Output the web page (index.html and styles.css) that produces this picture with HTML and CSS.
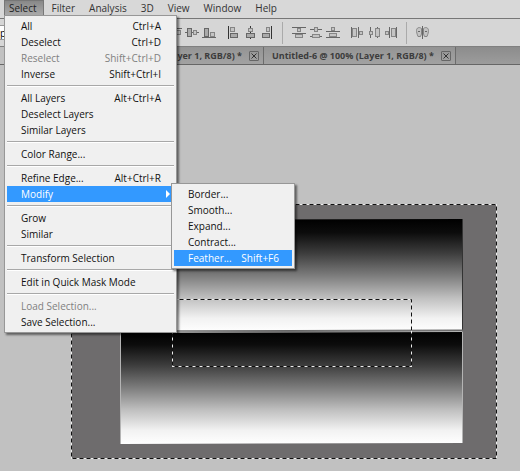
FILE: index.html
```html
<!DOCTYPE html>
<html lang="en">
<head>
    <meta charset="UTF-8">
    <meta name="viewport" content="width=device-width, initial-scale=1.0">
    <title>Untitled-6</title>
    <link rel="stylesheet" href="styles.css">
</head>
<body>

    <nav class="menubar">
        <div class="menu-root">
            <button type="button" class="top-item open">Select</button>
            <div class="menu">
                <button type="button" class="item"><span>All</span><span>Ctrl+A</span></button>
                <button type="button" class="item"><span>Deselect</span><span>Ctrl+D</span></button>
                <button type="button" class="item" disabled><span>Reselect</span><span>Shift+Ctrl+D</span></button>
                <button type="button" class="item"><span>Inverse</span><span>Shift+Ctrl+I</span></button>
                <hr>
                <button type="button" class="item"><span>All Layers</span><span>Alt+Ctrl+A</span></button>
                <button type="button" class="item">Deselect Layers</button>
                <button type="button" class="item">Similar Layers</button>
                <hr>
                <button type="button" class="item">Color Range...</button>
                <hr>
                <button type="button" class="item"><span>Refine Edge...</span><span>Alt+Ctrl+R</span></button>
                <div class="submenu-root">
                    <button type="button" class="item active has-submenu">
                        <span>Modify</span>
                        <svg width="4" height="8" viewBox="0 0 4 8"><path d="M0 0L4 4L0 8Z" fill="#fff"/></svg>
                    </button>
                    <div class="menu submenu">
                        <button type="button" class="item">Border...</button>
                        <button type="button" class="item">Smooth...</button>
                        <button type="button" class="item">Expand...</button>
                        <button type="button" class="item">Contract...</button>
                        <button type="button" class="item active"><span>Feather...</span><span>Shift+F6</span></button>
                    </div>
                </div>
                <hr>
                <button type="button" class="item">Grow</button>
                <button type="button" class="item">Similar</button>
                <hr>
                <button type="button" class="item">Transform Selection</button>
                <hr>
                <button type="button" class="item">Edit in Quick Mask Mode</button>
                <hr>
                <button type="button" class="item" disabled>Load Selection...</button>
                <button type="button" class="item">Save Selection...</button>
            </div>
        </div>
        <button type="button" class="top-item">Filter</button>
        <button type="button" class="top-item">Analysis</button>
        <button type="button" class="top-item">3D</button>
        <button type="button" class="top-item">View</button>
        <button type="button" class="top-item">Window</button>
        <button type="button" class="top-item">Help</button>
    </nav>

    <div class="options">
        <input type="text" class="field" value="p" aria-label="Auto-select">
        <div class="group">
            <button type="button" class="tool" aria-label="Align top edges">
                <svg viewBox="0 0 14 14"><path class="line" d="M0 2.5H14"/><rect class="dark" x="1.5" y="4.5" width="4" height="8"/><rect class="box" x="8.5" y="4.5" width="4" height="4"/></svg>
            </button>
            <button type="button" class="tool" aria-label="Align vertical centers">
                <svg viewBox="0 0 14 14"><path class="line" d="M0 6.5H14"/><rect class="dark" x="2.5" y="2.5" width="4" height="8"/><rect class="box" x="8.5" y="4.5" width="3" height="4"/></svg>
            </button>
            <button type="button" class="tool" aria-label="Align bottom edges">
                <svg viewBox="0 0 14 14"><path class="line" d="M0 11.5H14"/><rect class="dark" x="2.5" y="2.5" width="4" height="8"/><rect class="box" x="8.5" y="6.5" width="4" height="4"/></svg>
            </button>
        </div>
        <div class="group">
            <button type="button" class="tool" aria-label="Align left edges">
                <svg viewBox="0 0 14 14"><path class="line strong" d="M1.5 0V13"/><rect class="box" x="3.5" y="1.5" width="4" height="4"/><rect class="dark" x="3.5" y="7.5" width="7" height="4"/></svg>
            </button>
            <button type="button" class="tool" aria-label="Align horizontal centers">
                <svg viewBox="0 0 14 14"><path class="line strong" d="M6.5 0V13"/><rect class="box" x="4.5" y="2.5" width="4" height="3"/><rect class="dark" x="2.5" y="7.5" width="8" height="4"/></svg>
            </button>
            <button type="button" class="tool" aria-label="Align right edges">
                <svg viewBox="0 0 14 14"><path class="line strong" d="M10.5 0V13"/><rect class="box" x="5.5" y="1.5" width="3" height="4"/><rect class="dark" x="1.5" y="7.5" width="7" height="4"/></svg>
            </button>
        </div>
        <div class="group divided">
            <button type="button" class="tool" aria-label="Distribute top edges">
                <svg viewBox="0 0 14 14"><path class="line" d="M0 1.5H14M0 7.5H14"/><rect class="box" x="5.5" y="2.5" width="3" height="3"/><rect class="box" x="3.5" y="8.5" width="7" height="3"/></svg>
            </button>
            <button type="button" class="tool" aria-label="Distribute vertical centers">
                <svg viewBox="0 0 14 14"><path class="line" d="M1 3.5H13M1 10.5H13"/><rect class="box" x="5.5" y="1.5" width="3" height="4"/><rect class="box" x="3.5" y="8.5" width="7" height="3"/></svg>
            </button>
            <button type="button" class="tool" aria-label="Distribute bottom edges">
                <svg viewBox="0 0 14 14"><path class="line" d="M0 5.5H14M0 11.5H14"/><rect class="box" x="5.5" y="1.5" width="3" height="3"/><rect class="box" x="3.5" y="7.5" width="7" height="3"/></svg>
            </button>
        </div>
        <div class="group">
            <button type="button" class="tool" aria-label="Distribute left edges">
                <svg viewBox="0 0 14 14"><path class="line" d="M.5 1V12M7.5 1V12"/><rect class="box" x="1.5" y="2.5" width="4" height="8"/><rect class="box" x="8.5" y="5.5" width="3" height="3"/></svg>
            </button>
            <button type="button" class="tool" aria-label="Distribute horizontal centers">
                <svg viewBox="0 0 14 14"><path class="line" d="M2.5 1V12M9.5 1V12"/><rect class="box" x="1.5" y="5.5" width="3" height="3"/><rect class="box" x="7.5" y="2.5" width="4" height="8"/></svg>
            </button>
            <button type="button" class="tool" aria-label="Distribute right edges">
                <svg viewBox="0 0 14 14"><path class="line" d="M4.5 1V12M11.5 1V12"/><rect class="box" x=".5" y="5.5" width="3" height="3"/><rect class="box" x="6.5" y="2.5" width="4" height="8"/></svg>
            </button>
        </div>
        <div class="group divided">
            <button type="button" class="tool" aria-label="Auto-align layers">
                <svg viewBox="0 0 14 14"><path class="box" d="M5.5 2.5C3 .5 .5 2 .5 4.5C.5 6 1 8 2 10.5H4.5L5.5 8ZM7.5 2.5C10 .5 12.5 2 12.5 4.5C12.5 6 12 8 11 10.5H8.5L7.5 8Z"/><path class="line" d="M6.5 0V13M2 5.5H4M9 5.5H11"/></svg>
            </button>
        </div>
    </div>

    <div class="tabs">
        <div class="tab current"></div>
        <div class="tab clipped">
            <a href="#">Layer 1, RGB/8) *</a>
            <button type="button" class="close" aria-label="Close"><svg viewBox="0 0 8 8"><path d="M1.5 1.5L6.5 6.5M6.5 1.5L1.5 6.5"/></svg></button>
        </div>
        <div class="tab">
            <a href="#">Untitled-6 @ 100% (Layer 1, RGB/8) *</a>
            <button type="button" class="close" aria-label="Close"><svg viewBox="0 0 8 8"><path d="M1.5 1.5L6.5 6.5M6.5 1.5L1.5 6.5"/></svg></button>
        </div>
    </div>

    <main class="workspace">
        <svg class="document" viewBox="0 0 426 255">
            <defs>
                <linearGradient id="fade" x1="0" y1="0" x2="0" y2="1">
                    <stop offset="0" stop-color="#000"/>
                    <stop offset="0.12" stop-color="#0c0c0c"/>
                    <stop offset="0.3" stop-color="#3c3c3c"/>
                    <stop offset="0.5" stop-color="#7c7c7c"/>
                    <stop offset="0.7" stop-color="#c0c0c0"/>
                    <stop offset="0.88" stop-color="#f2f2f2"/>
                    <stop offset="1" stop-color="#fff"/>
                </linearGradient>
            </defs>
            <rect width="426" height="255" fill="#6e6c6d"/>
            <path d="M49 16L392 15V126L49 128Z" fill="url(#fade)"/>
            <path d="M391.5 15V126" stroke="#333"/>
            <path d="M49 128L392 127V239L49 240Z" fill="url(#fade)"/>
            <path d="M49 127L392 126" stroke="#666"/>
            <path d="M49.5 240V128.5L391.5 127.5V239" fill="none" stroke="#b4b4b4"/>
            <!-- marching ants -->
            <g class="ants">
                <rect x="101.5" y="95.5" width="239" height="67"/>
                <rect class="dash" x="101.5" y="95.5" width="239" height="67"/>
                <rect x=".5" y=".5" width="425" height="254"/>
                <rect class="dash" x=".5" y=".5" width="425" height="254"/>
            </g>
        </svg>
    </main>

</body>
</html>
```
FILE: styles.css
```css
* {
    box-sizing: border-box;
}

body {
    margin: 0;
    min-height: 100vh;
    display: flex;
    flex-direction: column;
    overflow: hidden;
    font-family: "Open Sans", "Noto Sans", sans-serif;
    font-size: 10px;
    color: #111;
    background-color: #c1c1c1;
}

button {
    font: inherit;
    color: inherit;
    border: 0;
    padding: 0;
    background: none;
    white-space: nowrap;
}

/* Menu bar */
.menubar {
    display: flex;
    height: 19px;
    padding-left: 4px;
    background-color: #d8d8d8;
    border-bottom: 1px solid #777;
}
.menu-root, .submenu-root {
    position: relative;
}
.top-item {
    height: 16px;
    padding: 0 7px;
    line-height: 16px;
    color: #333;
}
.top-item.open {
    margin-right: 1px;
    padding: 0 6px 0 4px;
    border: 1px solid #777;
    background: linear-gradient(#888, #aaa);
    line-height: 14px;
    color: #222;
}

/* Drop-down menus */
.menu {
    position: absolute;
    top: 15px;
    left: 0;
    z-index: 2;
    width: 173px;
    padding: 2px;
    background-color: #f0f0f0;
    border: 1px solid #979797;
    box-shadow: 2px 2px 2px rgba(0, 0, 0, 0.5);
}
.submenu {
    top: -3px;
    left: 164px;
    width: 124px;
}
.item {
    display: flex;
    justify-content: space-between;
    align-items: center;
    width: 100%;
    height: 16px;
    padding: 0 13px 0 14px;
    line-height: 16px;
}
.item:disabled {
    color: #808080;
}
.item.active {
    background-color: #3399ff;
    color: #fff;
}
.has-submenu {
    padding-right: 4px;
}
.menu hr {
    height: 2px;
    margin: 3px 0;
    border: 0;
    border-top: 1px solid #a8a8a8;
    border-bottom: 1px solid #fff;
}

/* Options bar */
.options {
    display: flex;
    align-items: center;
    height: 28px;
    background-color: #d6d6d6;
    border-bottom: 1px solid #808080;
}
.field {
    width: 100px;
    height: 15px;
    margin-right: 57px;
    padding: 0;
    border: 1px solid #999;
    border-left: 0;
    font: inherit;
}
.group {
    display: flex;
    gap: 3px;
    margin-left: 11px;
}
.group.divided {
    margin-left: 7px;
    padding-left: 9px;
    border-left: 1px solid #aaa;
    height: 22px;
    align-items: center;
}
.tool svg {
    display: block;
    width: 14px;
    height: 14px;
}
.line {
    fill: none;
    stroke: #666;
}
.line.strong {
    stroke: #333;
}
.box {
    fill: #c4c4c4;
    stroke: #858585;
}
.dark {
    fill: #aaa;
    stroke: #666;
}

/* Document tabs */
.tabs {
    display: flex;
    height: 18px;
    background: linear-gradient(#8c8c8c, #9c9c9c);
    border-bottom: 1px solid #666;
}
.tab {
    display: flex;
    align-items: center;
    gap: 7px;
    padding: 0 4px 0 8px;
    background: linear-gradient(#949494, #a2a2a2);
    border-right: 1px solid #6c6c6c;
}
.tab.current {
    width: 72px;
    background: #c1c1c1;
}
.tab.clipped {
    width: 192px;
    justify-content: flex-end;
}
.tab a {
    font-size: 9px;
    font-weight: 700;
    line-height: 16px;
    color: #3c3c3c;
    text-decoration: none;
    white-space: nowrap;
}
.close svg {
    display: block;
    width: 10px;
    height: 10px;
    border: 1px solid #666;
    border-radius: 1px;
    fill: none;
    stroke: #333;
}

/* Canvas */
.workspace {
    flex: 1;
    padding: 139px 23px 12px 71px;
    background-color: #c1c1c1;
}
.document {
    display: block;
    width: 100%;
}
.ants rect {
    fill: none;
    stroke: #eee;
}
.ants .dash {
    stroke: #111;
    stroke-dasharray: 4 3;
}
```
